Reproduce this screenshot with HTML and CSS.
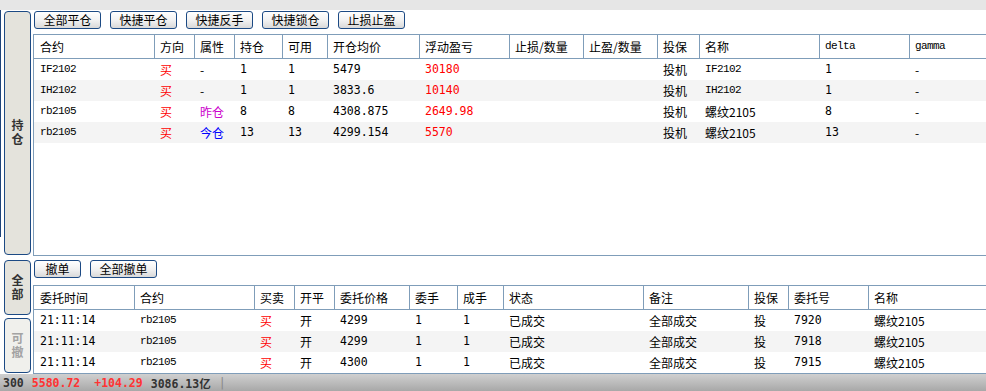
FILE: index.html
```html
<!DOCTYPE html>
<html lang="zh">
<head>
<meta charset="utf-8" />
<link rel="stylesheet" href="styles.css">
</head>
<body>
  <div class="topbar"></div>
  <div class="frame">
    <aside class="side">
      <div class="edge"></div>
      <div class="tabs">
        <div class="tab tab-pos"><span>持仓</span></div>
        <div class="tab tab-all"><span>全部</span></div>
        <div class="tab tab-off"><span>可撤</span></div>
      </div>
    </aside>

    <main class="main">
      <!-- 持仓 -->
      <div class="toolbar">
        <button class="btn">全部平仓</button>
        <button class="btn">快捷平仓</button>
        <button class="btn">快捷反手</button>
        <button class="btn">快捷锁仓</button>
        <button class="btn">止损止盈</button>
      </div>
      <div class="panel panel-pos">
        <div class="row pos head">
          <div>合约</div><div>方向</div><div>属性</div><div>持仓</div><div>可用</div>
          <div>开仓均价</div><div>浮动盈亏</div><div>止损/数量</div><div>止盈/数量</div>
          <div>投保</div><div>名称</div><div class="code">delta</div><div class="code">gamma</div>
        </div>
        <div class="row pos">
          <div class="code">IF2102</div><div class="red">买</div><div>-</div><div class="num">1</div><div class="num">1</div>
          <div class="num">5479</div><div class="num red">30180</div><div></div><div></div>
          <div>投机</div><div class="code">IF2102</div><div class="num">1</div><div>-</div>
        </div>
        <div class="row pos">
          <div class="code">IH2102</div><div class="red">买</div><div>-</div><div class="num">1</div><div class="num">1</div>
          <div class="num">3833.6</div><div class="num red">10140</div><div></div><div></div>
          <div>投机</div><div class="code">IH2102</div><div class="num">1</div><div>-</div>
        </div>
        <div class="row pos">
          <div class="code">rb2105</div><div class="red">买</div><div class="pink">昨仓</div><div class="num">8</div><div class="num">8</div>
          <div class="num">4308.875</div><div class="num red">2649.98</div><div></div><div></div>
          <div>投机</div><div>螺纹2105</div><div class="num">8</div><div>-</div>
        </div>
        <div class="row pos">
          <div class="code">rb2105</div><div class="red">买</div><div class="blue">今仓</div><div class="num">13</div><div class="num">13</div>
          <div class="num">4299.154</div><div class="num red">5570</div><div></div><div></div>
          <div>投机</div><div>螺纹2105</div><div class="num">13</div><div>-</div>
        </div>
      </div>

      <!-- 委托 -->
      <div class="toolbar toolbar-order">
        <button class="btn btn-small">撤单</button>
        <button class="btn">全部撤单</button>
      </div>
      <div class="panel panel-order">
        <div class="row order head">
          <div>委托时间</div><div>合约</div><div>买卖</div><div>开平</div><div>委托价格</div>
          <div>委手</div><div>成手</div><div>状态</div><div>备注</div><div>投保</div>
          <div>委托号</div><div>名称</div>
        </div>
        <div class="row order">
          <div class="num">21:11:14</div><div class="code">rb2105</div><div class="red">买</div><div>开</div><div class="num">4299</div>
          <div class="num">1</div><div class="num">1</div><div>已成交</div><div>全部成交</div><div>投</div>
          <div class="num">7920</div><div>螺纹2105</div>
        </div>
        <div class="row order">
          <div class="num">21:11:14</div><div class="code">rb2105</div><div class="red">买</div><div>开</div><div class="num">4299</div>
          <div class="num">1</div><div class="num">1</div><div>已成交</div><div>全部成交</div><div>投</div>
          <div class="num">7918</div><div>螺纹2105</div>
        </div>
        <div class="row order">
          <div class="num">21:11:14</div><div class="code">rb2105</div><div class="red">买</div><div>开</div><div class="num">4300</div>
          <div class="num">1</div><div class="num">1</div><div>已成交</div><div>全部成交</div><div>投</div>
          <div class="num">7915</div><div>螺纹2105</div>
        </div>
      </div>
    </main>
  </div>

  <div class="status">
    <span class="idx">300</span>
    <span class="up">5580.72</span>
    <span class="up gap">+104.29</span>
    <span class="idx">3086.13亿</span>
    <span class="sep">|</span>
  </div>
</body>
</html>
```

FILE: styles.css
```css
*{
  margin:0;
  padding:0;
  box-sizing:border-box;
}
body{
  width:986px;
  height:391px;
  overflow:hidden;
  background:#fff;
  font-family:"Noto Sans CJK SC", sans-serif;
  font-size:12px;
  color:#000;
}
.topbar{
  height:10px;
  background:#e6e6e6;
}
.frame{
  display:flex;
  height:364px;
}

/* 左侧标签 */
.side{
  width:33px;
  display:flex;
}
.edge{
  width:1px;
  height:227px;
  background:#1d4379;
  margin-right:3px;
}
.tabs{
  width:27px;
  display:flex;
  flex-direction:column;
  padding-top:1px;
}
.tab{
  border:1px solid #1c4a84;
  border-radius:4px;
  background:#e4e3dc;
  display:flex;
  align-items:center;
  justify-content:center;
  color:#333;
  font-weight:bold;
  font-size:12px;
}
.tab span{
  writing-mode:vertical-lr;
  letter-spacing:2px;
  line-height:13px;
}
.tab-pos{
  height:244px;
}
.tab-all{
  height:55px;
  margin-top:5px;
}
.tab-off{
  height:55px;
  margin-top:3px;
  background:#f0f0ec;
  color:#a3a3a3;
}

/* 右侧主体 */
.main{
  flex:1;
  display:flex;
  flex-direction:column;
}
.toolbar{
  display:flex;
  gap:9px;
  height:18px;
  margin-top:1px;
  padding-left:1px;
}
.toolbar-order{
  margin-top:4px;
}
.btn{
  width:67px;
  height:18px;
  border:1px solid #1c4a84;
  border-radius:3px;
  background:linear-gradient(#ffffff, #f2f2f2 50%, #d9d9d9);
  font-family:"Noto Sans CJK SC", sans-serif;
  font-size:12px;
  line-height:16px;
  color:#000;
}
.btn-small{
  width:47px;
}
.panel{
  border-left:1px solid #7f9db9;
  border-bottom:1px solid #7f9db9;
  overflow:hidden;
}
.panel-pos{
  height:222px;
  margin-top:5px;
}
.panel-order{
  height:89px;
  margin-top:7px;
}

.row{
  display:grid;
  height:21px;
  line-height:21px;
  white-space:nowrap;
}
.row:nth-child(odd){
  background:#f4f4f4;
}
.row.head{
  height:25px;
  line-height:23px;
  background:#fff;
  border-top:1px solid #7f9db9;
  border-bottom:1px solid #7f9db9;
}
.pos{
  grid-template-columns:120px 40px 40px 48px 45px 92px 90px 74px 74px 42px 120px 90px 1fr;
}
.order{
  grid-template-columns:100px 120px 40px 40px 75px 48px 46px 140px 105px 40px 80px 1fr;
}
.row div{
  padding-left:5px;
  border-left:1px solid transparent;
  overflow:hidden;
}
.row div:first-child{
  padding-left:6px;
  border-left:0;
}
.row.head div{
  border-left-color:#7f9db9;
}
.row.head div:first-child{
  border-left:0;
}

.num{
  font-family:"DejaVu Sans Mono", monospace;
  font-size:11.5px;
}
.code{
  font-family:"Liberation Mono", monospace;
  font-size:11px;
  letter-spacing:-0.6px;
}
.red{
  color:#ff0000;
}
.pink{
  color:#cc00cc;
}
.blue{
  color:#0000ff;
}

/* 底部行情条 */
.status{
  height:17px;
  display:flex;
  align-items:center;
  gap:8px;
  padding-left:3px;
  background:linear-gradient(#d0d0d0, #a8a8a8);
  font-family:"DejaVu Sans Mono", "Noto Sans CJK SC", monospace;
  font-size:11.5px;
  font-weight:bold;
}
.status .idx{
  color:#333;
}
.status .up{
  color:#ff3333;
}
.status .gap{
  margin-left:6px;
}
.status .sep{
  color:#888;
  font-weight:normal;
}
```
